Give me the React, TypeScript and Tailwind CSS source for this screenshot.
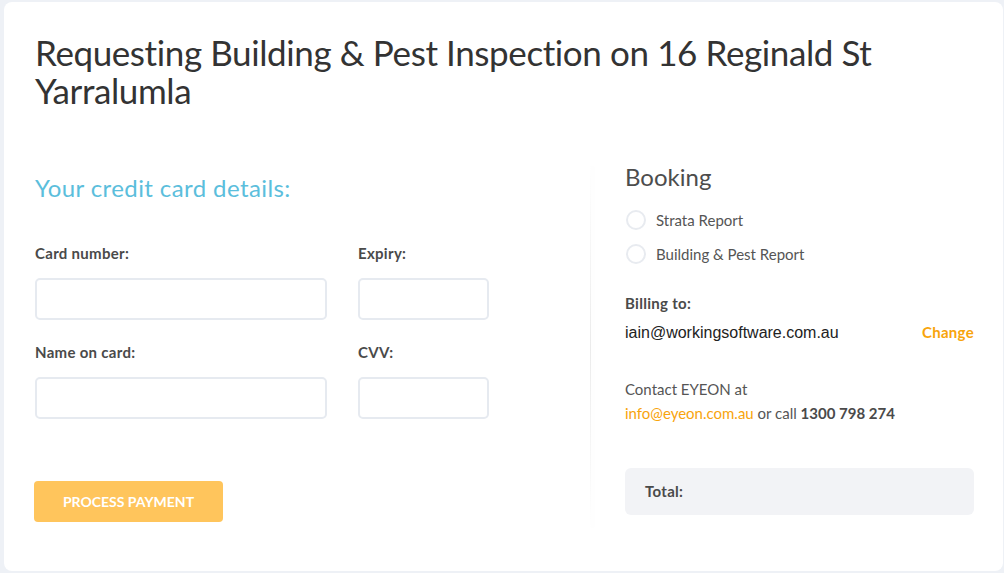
import React from "react";

const font = { fontFamily: "Lato, 'Open Sans', sans-serif" };

export default function App() {
  return (
    <div className="min-h-[573px] w-full bg-[#eef1f6] pt-[2px] pb-[2px] pl-[4px] pr-[1px]" style={font}>
      <div className="h-[569px] rounded-lg bg-white pl-[31px] pr-[29px] pt-[31px]">
        <h1 className="text-[35px] leading-[38px] font-normal text-[#333333] tracking-[-0.4px]">
          Requesting Building &amp; Pest Inspection on 16 Reginald St Yarralumla
        </h1>
        <div className="mt-[53px] flex">
          {/* Left column */}
          <div className="w-[555px] pt-[11px]">
            <h2 className="text-[24px] leading-[30px] text-[#5bbedc] font-normal tracking-[0.4px]">Your credit card details:</h2>
            <div className="mt-[40px] flex gap-[31px]">
              <div className="w-[292px]">
                <div className="text-[15px] leading-[20px] font-bold text-[#4a4a4a] tracking-[0.3px]">Card number:</div>
                <input className="mt-[15px] block h-[42px] w-full rounded-[5px] border-2 border-[#e6eaf0] outline-none" />
              </div>
              <div className="w-[131px]">
                <div className="text-[15px] leading-[20px] font-bold text-[#4a4a4a] tracking-[0.3px]">Expiry:</div>
                <input className="mt-[15px] block h-[42px] w-full rounded-[5px] border-2 border-[#e6eaf0] outline-none" />
              </div>
            </div>
            <div className="mt-[22px] flex gap-[31px]">
              <div className="w-[292px]">
                <div className="text-[15px] leading-[20px] font-bold text-[#4a4a4a] tracking-[0.3px]">Name on card:</div>
                <input className="mt-[15px] block h-[42px] w-full rounded-[5px] border-2 border-[#e6eaf0] outline-none" />
              </div>
              <div className="w-[131px]">
                <div className="text-[15px] leading-[20px] font-bold text-[#4a4a4a] tracking-[0.3px]">CVV:</div>
                <input className="mt-[15px] block h-[42px] w-full rounded-[5px] border-2 border-[#e6eaf0] outline-none" />
              </div>
            </div>
            <button className="mt-[62px] -ml-px h-[41px] w-[189px] rounded-[4px] bg-[#ffc55c] text-[14px] font-bold uppercase text-white">
              Process Payment
            </button>
          </div>

          {/* Divider */}
          <div className="mt-[3px] h-[364px] w-px bg-gradient-to-b from-transparent via-[#ebebeb] to-transparent shadow-[2px_0_4px_rgba(0,0,0,0.035)]" />

          {/* Right column */}
          <div className="flex-1 pl-[34px]">
            <h2 className="text-[24px] leading-[30px] font-normal text-[#4d4d4d]">Booking</h2>
            <div className="mt-[18px] flex flex-col gap-[14px]">
              {["Strata Report", "Building & Pest Report"].map((t) => (
                <label key={t} className="flex items-center gap-[10px] text-[15px] leading-[20px] text-[#555555]">
                  <span className="ml-px block h-[20px] w-[20px] rounded-full border-2 border-[#e8ebf0]" />
                  {t}
                </label>
              ))}
            </div>
            <div className="mt-[29px] text-[15px] leading-[20px] font-bold text-[#4a4a4a] tracking-[0.3px]">Billing to:</div>
            <div className="mt-[8px] flex items-baseline justify-between">
              <span className="text-[16px] leading-[20px] text-[#222222]" style={{ fontFamily: "'Liberation Sans', Arial, sans-serif" }}>
                iain@workingsoftware.com.au
              </span>
              <a className="text-[15px] font-bold text-[#f8a40c] tracking-[0.3px]">Change</a>
            </div>
            <div className="mt-[33px] text-[15px] leading-[24px] text-[#555555]">
              <div>Contact EYEON at</div>
              <div>
                <a className="text-[#f8a40c]">info@eyeon.com.au</a> or call{" "}
                <span className="font-bold text-[#4a4a4a]">1300 798 274</span>
              </div>
            </div>
            <div className="mt-[43px] flex h-[47px] items-center rounded-[6px] bg-[#f2f3f6] pl-[20px]">
              <span className="text-[15px] font-bold text-[#4a4a4a] tracking-[0.3px]">Total:</span>
            </div>
          </div>
        </div>
      </div>
    </div>
  );
}
